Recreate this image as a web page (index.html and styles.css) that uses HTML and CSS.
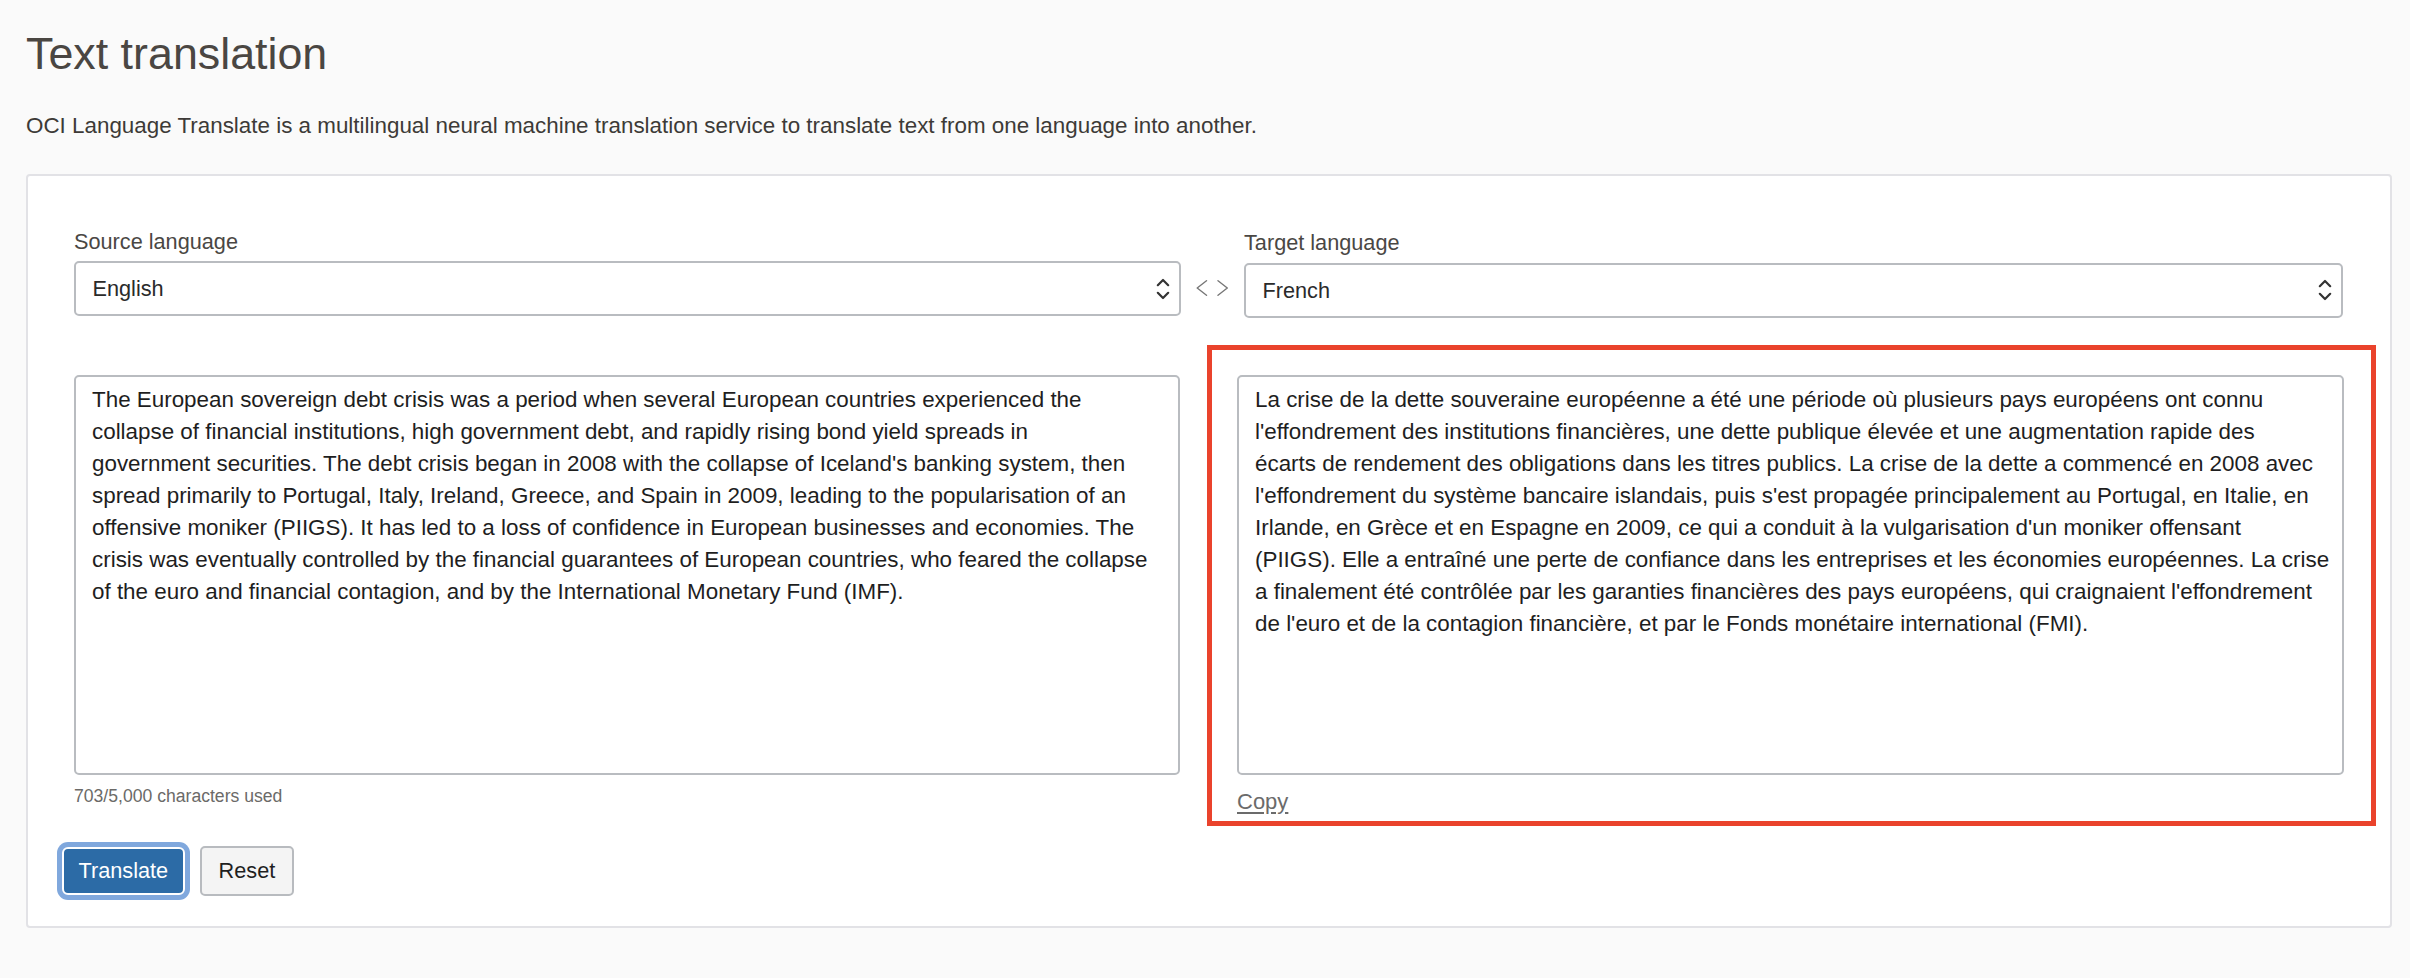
FILE: index.html
```html
<!DOCTYPE html>
<html lang="en">
<head>
<meta charset="utf-8">
<title>Text translation</title>
<link rel="stylesheet" href="styles.css">
</head>
<body>
<div class="page">
  <h1 class="title">Text translation</h1>
  <p class="intro">OCI Language Translate is a multilingual neural machine translation service to translate text from one language into another.</p>

  <section class="card">
    <div class="lang-row">
      <div class="field field-source">
        <label class="label" for="src">Source language</label>
        <div class="select-wrap">
          <select id="src" class="select"><option>English</option></select>
          <svg class="select-arrows" width="14" height="24" viewBox="0 0 14 24" aria-hidden="true">
            <path d="M1.8 8.2 L7 3 L12.2 8.2" />
            <path d="M1.8 15.8 L7 21 L12.2 15.8" />
          </svg>
        </div>
      </div>

      <div class="swap">
        <svg width="33" height="16" viewBox="0 0 33 16" aria-hidden="true">
          <path d="M10.5 0.8 L1.2 8 L10.5 15.2" />
          <path d="M22 0.8 L31.3 8 L22 15.2" />
        </svg>
      </div>

      <div class="field field-target">
        <label class="label" for="tgt">Target language</label>
        <div class="select-wrap">
          <select id="tgt" class="select"><option>French</option></select>
          <svg class="select-arrows" width="14" height="24" viewBox="0 0 14 24" aria-hidden="true">
            <path d="M1.8 8.2 L7 3 L12.2 8.2" />
            <path d="M1.8 15.8 L7 21 L12.2 15.8" />
          </svg>
        </div>
      </div>
    </div>

    <div class="text-row">
      <div class="source-col">
        <div class="textbox">The European sovereign debt crisis was a period when several European countries experienced the<br>collapse of financial institutions, high government debt, and rapidly rising bond yield spreads in<br>government securities. The debt crisis began in 2008 with the collapse of Iceland's banking system, then<br>spread primarily to Portugal, Italy, Ireland, Greece, and Spain in 2009, leading to the popularisation of an<br>offensive moniker (PIIGS). It has led to a loss of confidence in European businesses and economies. The<br>crisis was eventually controlled by the financial guarantees of European countries, who feared the collapse<br>of the euro and financial contagion, and by the International Monetary Fund (IMF).</div>
        <div class="count">703/5,000 characters used</div>
      </div>

      <div class="highlight">
        <div class="textbox">La crise de la dette souveraine européenne a été une période où plusieurs pays européens ont connu<br>l'effondrement des institutions financières, une dette publique élevée et une augmentation rapide des<br>écarts de rendement des obligations dans les titres publics. La crise de la dette a commencé en 2008 avec<br>l'effondrement du système bancaire islandais, puis s'est propagée principalement au Portugal, en Italie, en<br>Irlande, en Grèce et en Espagne en 2009, ce qui a conduit à la vulgarisation d'un moniker offensant<br>(PIIGS). Elle a entraîné une perte de confiance dans les entreprises et les économies européennes. La crise<br>a finalement été contrôlée par les garanties financières des pays européens, qui craignaient l'effondrement<br>de l'euro et de la contagion financière, et par le Fonds monétaire international (FMI).</div>
        <a class="copy" href="#">Copy</a>
      </div>
    </div>

    <div class="actions">
      <button class="btn btn-primary" type="button">Translate</button>
      <button class="btn btn-secondary" type="button">Reset</button>
    </div>
  </section>
</div>
</body>
</html>
```

FILE: styles.css
```css
* {
  box-sizing: border-box;
}

html, body {
  margin: 0;
  padding: 0;
  background: #fafafa;
}

body {
  font-family: "Liberation Sans", Arial, Helvetica, sans-serif;
  color: #1e1e1e;
}

.page {
  padding: 27px 18px 50px 26px;
}

.title {
  margin: 0;
  font-size: 44.8px;
  line-height: 52px;
  font-weight: normal;
  color: #4a4642;
}

.intro {
  margin: 31px 0 0 0;
  font-size: 22.4px;
  line-height: 32px;
  color: #3d3a37;
}

.card {
  margin-top: 32px;
  background: #fff;
  border: 2px solid #e2e2e6;
  border-radius: 4px;
  padding: 50.5px 14px 30px 34px;
}

/* language selectors */
.lang-row {
  display: flex;
  align-items: flex-start;
  padding-left: 12px;
}

.field {
  display: flex;
  flex-direction: column;
}

.field-source {
  width: 1107px;
}

.field-target {
  width: 1099px;
  margin-top: 1.5px;
}

.label {
  font-size: 21.7px;
  line-height: 30px;
  color: #4a4744;
  margin-bottom: 4.5px;
}

.select-wrap {
  position: relative;
}

.select {
  -webkit-appearance: none;
  appearance: none;
  display: block;
  width: 100%;
  height: 55px;
  margin: 0;
  padding: 0 44px 0 16.5px;
  border: 2px solid #b9bcc0;
  border-radius: 5px;
  background: #fff;
  font-family: inherit;
  font-size: 21.7px;
  color: #2a2a2a;
}

.select-arrows {
  position: absolute;
  right: 11.5px;
  top: 15.5px;
  pointer-events: none;
  fill: none;
  stroke: #333;
  stroke-width: 2.2;
  stroke-linecap: round;
  stroke-linejoin: round;
}

.swap {
  width: 63px;
  height: 55px;
  margin-top: 34.5px;
  display: flex;
  align-items: center;
  justify-content: center;
}

.swap svg {
  fill: none;
  stroke: #777;
  stroke-width: 1.4;
  stroke-linecap: round;
  stroke-linejoin: round;
  margin-top: -2px;
}

/* text areas */
.text-row {
  display: flex;
  align-items: flex-start;
  margin-top: 27px;
  padding-left: 12px;
}

.source-col {
  width: 1107px;
  margin-top: 30px;
}

.textbox {
  height: 400px;
  border: 2px solid #b9bcc0;
  border-radius: 5px;
  background: #fff;
  padding: 7.5px 16px;
  font-size: 22.4px;
  line-height: 32px;
  color: #1e1e1e;
  white-space: nowrap;
  overflow: hidden;
}

.count {
  margin-top: 9px;
  font-size: 17.6px;
  line-height: 24px;
  color: #6b6a68;
}

.highlight {
  width: 1169px;
  margin-left: 27px;
  border: 5px solid #ea432c;
  padding: 25px 27px 6px 25px;
}

.highlight .textbox {
  width: 1107px;
}

.copy {
  display: inline-block;
  margin-top: 14px;
  font-size: 22px;
  line-height: 26px;
  color: #6b6b6b;
  text-decoration: underline;
  text-underline-offset: 3px;
}

/* buttons */
.actions {
  display: flex;
  align-items: center;
  gap: 15.5px;
  margin-top: 20px;
}

.btn {
  font-family: inherit;
  font-size: 21.7px;
  margin: 0;
  cursor: pointer;
}

.btn-primary {
  height: 48px;
  padding: 0 14.5px;
  background: #2c6ba6;
  color: #fff;
  border: 2px solid #fff;
  border-radius: 6px;
  box-shadow: 0 0 0 5px #80a8dd;
}

.btn-secondary {
  height: 50px;
  padding: 0 16.5px;
  background: #f4f4f4;
  color: #1f1f1f;
  border: 2px solid #b8bbbf;
  border-radius: 5px;
}
```
